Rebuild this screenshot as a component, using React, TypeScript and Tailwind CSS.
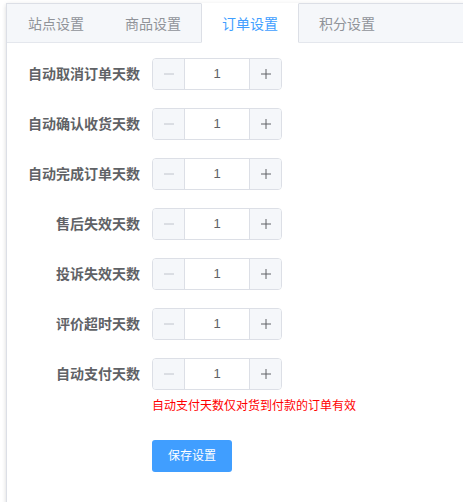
import React from 'react';

const tabs = ['站点设置', '商品设置', '订单设置', '积分设置'];

const fields = [
  { label: '自动取消订单天数', value: 1 },
  { label: '自动确认收货天数', value: 1 },
  { label: '自动完成订单天数', value: 1 },
  { label: '售后失效天数', value: 1 },
  { label: '投诉失效天数', value: 1 },
  { label: '评价超时天数', value: 1 },
  { label: '自动支付天数', value: 1, hint: '自动支付天数仅对货到付款的订单有效' },
];

const Stepper = ({ value }: { value: number }) => (
  <div className="flex h-8 w-[130px] rounded-[4px] border border-[#dcdfe6] overflow-hidden">
    <div className="flex w-8 items-center justify-center bg-[#f5f7fa] border-r border-[#dcdfe6] text-[#c0c4cc]">
      <svg width="12" height="12" viewBox="0 0 12 12">
        <path d="M1 6h10" stroke="currentColor" strokeWidth="1" />
      </svg>
    </div>
    <div className="flex flex-1 items-center justify-center bg-white text-[13px] text-[#606266]">
      {value}
    </div>
    <div className="flex w-8 items-center justify-center bg-[#f5f7fa] border-l border-[#dcdfe6] text-[#606266]">
      <svg width="12" height="12" viewBox="0 0 12 12">
        <path d="M1 6h10M6 1v10" stroke="currentColor" strokeWidth="1" />
      </svg>
    </div>
  </div>
);

const App = () => {
  const active = 2;
  return (
    <div
      className="h-[502px] overflow-hidden bg-white pl-[6px] pt-[3px]"
      style={{ fontFamily: '"Liberation Sans", "Noto Sans CJK SC", sans-serif' }}
    >
      <div className="w-[600px] h-[560px] border border-[#dcdfe6] bg-white shadow-[0_2px_4px_rgba(0,0,0,0.12),0_0_6px_rgba(0,0,0,0.04)]">
        <div className="bg-[#f5f7fa] border-b border-[#e4e7ed]">
          <div className="flex -mb-px">
            {tabs.map((tab, i) => (
              <div
                key={tab}
                className={
                  'h-10 -mt-px px-5 pt-px border leading-[38px] text-[14px] ' +
                  (i > 0 ? '-ml-px ' : '') +
                  (i === active
                    ? 'bg-white text-[#409eff] border-t-transparent border-b-transparent border-l-[#dcdfe6] border-r-[#dcdfe6]'
                    : 'border-transparent text-[#909399]')
                }
              >
                {tab}
              </div>
            ))}
          </div>
        </div>

        <div className="p-[15px]">
          {fields.map((f) => (
            <div key={f.label} className="flex mb-[18px]">
              <div className="w-[130px] shrink-0 pr-3 text-right text-[14px] font-bold leading-8 text-[#606266]">
                {f.label}
              </div>
              <div>
                <Stepper value={f.value} />
                {f.hint && (
                  <div className="text-[12px] leading-8 text-[#ff0000]">{f.hint}</div>
                )}
              </div>
            </div>
          ))}
          <div className="pl-[130px]">
            <button className="h-8 w-20 rounded-[3px] bg-[#409eff] text-[12px] text-white">
              保存设置
            </button>
          </div>
        </div>
      </div>
    </div>
  );
};

export default App;
